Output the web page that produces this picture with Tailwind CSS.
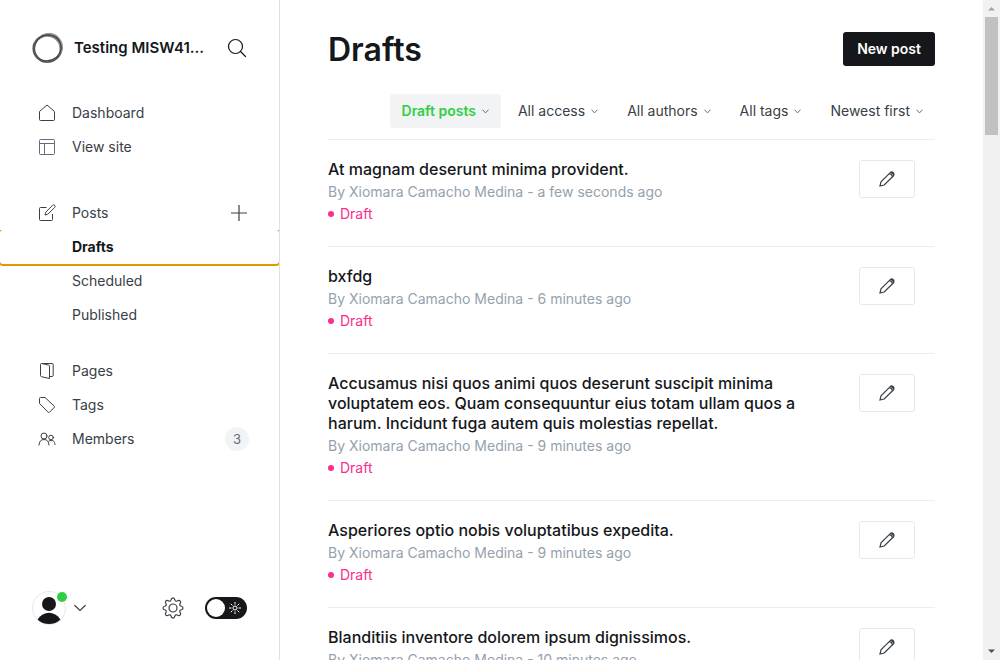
<!DOCTYPE html>
<html lang="en">
<head>
<meta charset="utf-8">
<meta name="viewport" content="width=device-width, initial-scale=1">
<title>Drafts</title>
<script src="https://cdn.jsdelivr.net/npm/@tailwindcss/browser@4"></script>
</head>
<body class="flex h-screen overflow-hidden bg-white font-[Inter,'Liberation_Sans',sans-serif] text-sm text-[#394047]">
<svg class="hidden" aria-hidden="true">
  <symbol id="pencil" viewBox="0 0 16 16"><path d="M1 15 2 10.800 11 1.800C12 .8 13.400.9 14.300 1.700s.9 2.300 0 3.300L5.200 14 1 15ZM10.300 2.600C11.800 2.800 13.200 4.200 13.400 5.700M12.300 1.400c1 .6 1.800 1.400 2.300 2.300"/></symbol>
  <symbol id="chevron" viewBox="0 0 7 5"><path d="M.5.7 3.5 3.9 6.5.7"/></symbol>
</svg>

<aside class="flex w-[280px] shrink-0 flex-col overflow-hidden border-r border-[#dde1e5]">
  <header class="flex items-center pt-8 pr-[30px] pl-8">
    <svg class="size-8 shrink-0" viewBox="0 0 32 32" fill="none" aria-hidden="true">
      <ellipse cx="15.300" cy="16.600" rx="13.700" ry="13.200" stroke="#8a8a8a" stroke-width="2.600"/>
      <path d="M10 3.200C17-.5 25 1.500 28.500 8c3.500 6 2.500 12-2.500 18 2.500-5 3-12 0-16C22 4 16 2.500 10 3.200Z" fill="#a8a8a8" stroke="#888" stroke-width=".8"/>
      <ellipse cx="15.300" cy="16.600" rx="14" ry="13.600" stroke="#444" stroke-width="1"/>
      <ellipse cx="15.800" cy="16" rx="12.600" ry="13.600" stroke="#444" stroke-width="1" transform="rotate(50 16 16)"/>
      <path d="M2 12C.5 20 5 27.500 12 30" stroke="#555" stroke-width="1.400"/>
    </svg>
    <span class="ml-[10px] min-w-0 flex-1 truncate text-[15px] font-semibold text-[#15171a]">Testing MISW41...</span>
    <button class="ml-4 flex size-6 items-center justify-center text-[#15171a]" aria-label="Search">
      <svg class="size-5" viewBox="0 0 20 20" fill="none" stroke="currentColor" stroke-width="1.2" stroke-linecap="round"><circle cx="8.5" cy="8.5" r="7"/><path d="m13.500 13.500 5 5"/></svg>
    </button>
  </header>

  <nav class="mt-8 flex flex-col" aria-label="Main">
    <a href="#" class="flex h-[34px] items-center gap-4 px-[38px]">
      <svg class="size-[18px]" viewBox="0 0 18 18" fill="none" stroke="currentColor"><path d="M1.5 7.5 9 1l7.5 6.5v8a1 1 0 0 1-1 1h-13a1 1 0 0 1-1-1Z"/></svg>Dashboard</a>
    <a href="#" class="flex h-[34px] items-center gap-4 px-[38px]">
      <svg class="size-[18px] text-[#626d79]" viewBox="0 0 18 18" fill="none" stroke="currentColor"><rect x="1.5" y="1.5" width="15" height="15" rx="1"/><path d="M1.5 5.5h15M6.5 5.5v11"/></svg>View site</a>

    <div class="relative z-10 mt-8 flex h-[34px] items-center justify-between bg-white pr-[31px]">
      <a href="#" class="flex items-center gap-4 pl-[38px]">
        <svg class="size-[18px]" viewBox="0 0 18 18" fill="none" stroke="currentColor" stroke-linejoin="round"><path d="M8.5 3.5H2.5a1 1 0 0 0-1 1v11a1 1 0 0 0 1 1h11a1 1 0 0 0 1-1V10"/><path d="m7 11 .7-2.8 6.9-6.9a1.4 1.4 0 0 1 2.1 2.1L9.8 10.3Z"/></svg>Posts</a>
      <a href="#" class="flex size-[18px] items-center justify-center" aria-label="New post">
        <svg class="size-[18px]" viewBox="0 0 18 18" stroke="currentColor" stroke-width="1.200"><path d="M9 1v16M1 9h16"/></svg></a>
    </div>
    <a href="#" aria-current="page" class="flex h-[34px] items-center rounded-[3px] pl-[72px] font-bold text-[#15171a] outline-2 outline-[#e59700]">Drafts</a>
    <a href="#" class="flex h-[34px] items-center pl-[72px]">Scheduled</a>
    <a href="#" class="flex h-[34px] items-center pl-[72px]">Published</a>

    <a href="#" class="mt-[22px] flex h-[34px] items-center gap-4 px-[38px]">
      <svg class="size-[18px]" viewBox="0 0 18 18" fill="none" stroke="currentColor" stroke-linejoin="round"><path d="M3.500 1.500 10.500 3a1.200 1.200 0 0 1 1 1.200v12.300l-8-1.800a1.200 1.200 0 0 1-1-1.200v-11a1 1 0 0 1 1-1h10.500a1.200 1.200 0 0 1 1.200 1.200v10.600a1.200 1.200 0 0 1-1.200 1.200h-2.500"/></svg>Pages</a>
    <a href="#" class="flex h-[34px] items-center gap-4 px-[38px]">
      <svg class="size-[18px]" viewBox="0 0 18 18" fill="none" stroke="currentColor" stroke-linejoin="round"><path d="M1.500 2.500a1 1 0 0 1 1-1H7l9.200 8.600a1 1 0 0 1 0 1.400l-4.700 4.700a1 1 0 0 1-1.400 0L1.500 7.500Z"/></svg>Tags</a>
    <a href="#" class="flex h-[34px] items-center gap-4 pr-[30px] pl-[38px]">
      <svg class="size-[18px]" viewBox="0 0 18 18" fill="none" stroke="currentColor" stroke-linecap="round"><circle cx="6" cy="6" r="3"/><path d="M1 15c0-3.500 2-5.500 5-5.500s5 2 5 5.500"/><circle cx="13" cy="7.500" r="2.300"/><path d="M11 11c3-1.800 6-.2 6 3.500"/></svg>Members
      <span class="ml-auto flex size-6 items-center justify-center rounded-full bg-[#f1f3f4] text-[13px] text-[#626d79]">3</span></a>
  </nav>

  <footer class="mt-auto flex items-center pr-8 pb-[34px] pl-8">
    <button class="flex items-center gap-[6px]" aria-label="Account">
      <svg class="size-9" viewBox="0 0 36 36"><circle cx="17" cy="18" r="16.500" fill="#fff" stroke="#e6e9eb"/><circle cx="17" cy="14" r="7" fill="#15171a"/><path d="M5.500 29.500c6-9 17-9 23 0-6 6-17 6-23 0Z" fill="#15171a"/><circle cx="30" cy="7" r="5" fill="#30cf43"/></svg>
      <svg class="h-2 w-3" viewBox="0 0 12 8" fill="none" stroke="currentColor" stroke-width="1.200" stroke-linecap="round"><path d="M.8 1.500 6 6.500l5.200-5"/></svg>
    </button>
    <a href="#" class="ml-auto" aria-label="Settings">
      <svg class="size-[22px]" viewBox="0 0 22 22" fill="none" stroke="currentColor" stroke-width="1.200" stroke-linejoin="round"><circle cx="11" cy="11" r="4"/><path d="M9 3.200c.6-3 3.400-3 4 0 .3 1 1.200 1.300 2.100.8 2.600-1.600 4.500.3 2.900 2.900-.5.900-.2 1.800.8 2.100 3 .6 3 3.400 0 4-1 .3-1.300 1.200-.8 2.100 1.600 2.600-.3 4.500-2.900 2.900-.9-.5-1.800-.2-2.100.8-.6 3-3.400 3-4 0-.3-1-1.200-1.300-2.100-.8-2.600 1.600-4.500-.3-2.900-2.900.5-.9.200-1.800-.8-2.100-3-.6-3-3.400 0-4 1-.3 1.300-1.200.8-2.100-1.600-2.600.3-4.500 2.900-2.900.9.500 1.800.2 2.100-.8Z"/></svg></a>
    <button class="ml-[21px] flex h-[22px] w-[42px] items-center justify-between rounded-full bg-[#15171a] pr-[6px] pl-[2px] text-white" role="switch" aria-checked="false" aria-label="Night shift">
      <span class="size-[18px] rounded-full bg-white"></span>
      <svg class="size-3" viewBox="0 0 12 12" fill="none" stroke="currentColor"><circle cx="6" cy="6" r="2"/><path d="M6 0v2.500M6 9.500V12M0 6h2.500M9.500 6H12M1.800 1.800l1.700 1.700M8.500 8.500l1.700 1.700M1.800 10.200l1.700-1.700M8.500 3.500l1.700-1.700"/></svg>
    </button>
  </footer>
</aside>

<main class="min-w-0 flex-1 overflow-hidden px-12">
  <header class="flex items-start justify-between pt-8">
    <h1 class="text-[32px] leading-9 font-semibold text-[#15171a]">Drafts</h1>
    <a href="#" class="flex h-[34px] items-center rounded-[3px] bg-[#15171a] px-[14px] font-semibold text-white">New post</a>
  </header>
  <form class="mt-[26px] flex justify-end gap-[5px] border-b border-[#ebeef0] pb-[11px]">
    <label class="flex h-[34px] items-center gap-[6px] rounded-[3px] bg-[#f1f3f4] px-3 font-semibold text-[#30cf43]"><select aria-label="Post status" class="field-sizing-content appearance-none"><option>Draft posts</option></select><svg class="h-[5px] w-[7px] fill-none stroke-[#626d79]"><use href="#chevron"/></svg></label>
    <label class="flex h-[34px] items-center gap-[6px] px-3"><select aria-label="Access" class="field-sizing-content appearance-none"><option>All access</option></select><svg class="h-[5px] w-[7px] fill-none stroke-[#626d79]"><use href="#chevron"/></svg></label>
    <label class="flex h-[34px] items-center gap-[6px] px-3"><select aria-label="Author" class="field-sizing-content appearance-none"><option>All authors</option></select><svg class="h-[5px] w-[7px] fill-none stroke-[#626d79]"><use href="#chevron"/></svg></label>
    <label class="flex h-[34px] items-center gap-[6px] px-3"><select aria-label="Tag" class="field-sizing-content appearance-none"><option>All tags</option></select><svg class="h-[5px] w-[7px] fill-none stroke-[#626d79]"><use href="#chevron"/></svg></label>
    <label class="flex h-[34px] items-center gap-[6px] px-3"><select aria-label="Sort order" class="field-sizing-content appearance-none"><option>Newest first</option></select><svg class="h-[5px] w-[7px] fill-none stroke-[#626d79]"><use href="#chevron"/></svg></label>
  </form>

  <ol class="text-sm leading-[22px] text-[#95a1ad]">
    <li class="flex items-start justify-between border-b border-[#ebeef0] pt-[19px] pr-5 pb-[21px]">
      <div class="max-w-[480px]"><h3 class="mb-[2px] text-base leading-5 font-medium text-[#15171a]">At magnam deserunt minima provident.</h3><p>By Xiomara Camacho Medina - a few seconds ago</p><p class="flex items-center gap-[6px] text-[#fb2d8d]"><span class="size-[6px] rounded-full bg-current"></span>Draft</p></div>
      <a href="#" aria-label="Edit post" class="mt-px flex h-[38px] w-14 shrink-0 items-center justify-center rounded-[3px] border border-[#e6e9eb] text-[#394047]"><svg class="size-4 fill-none stroke-current stroke-[1.2]"><use href="#pencil"/></svg></a>
    </li>
    <li class="flex items-start justify-between border-b border-[#ebeef0] pt-[19px] pr-5 pb-[21px]">
      <div class="max-w-[480px]"><h3 class="mb-[2px] text-base leading-5 font-medium text-[#15171a]">bxfdg</h3><p>By Xiomara Camacho Medina - 6 minutes ago</p><p class="flex items-center gap-[6px] text-[#fb2d8d]"><span class="size-[6px] rounded-full bg-current"></span>Draft</p></div>
      <a href="#" aria-label="Edit post" class="mt-px flex h-[38px] w-14 shrink-0 items-center justify-center rounded-[3px] border border-[#e6e9eb] text-[#394047]"><svg class="size-4 fill-none stroke-current stroke-[1.2]"><use href="#pencil"/></svg></a>
    </li>
    <li class="flex items-start justify-between border-b border-[#ebeef0] pt-[19px] pr-5 pb-[21px]">
      <div class="max-w-[480px]"><h3 class="mb-[2px] text-base leading-5 font-medium text-[#15171a]">Accusamus nisi quos animi quos deserunt suscipit minima voluptatem eos. Quam consequuntur eius totam ullam quos a harum. Incidunt fuga autem quis molestias repellat.</h3><p>By Xiomara Camacho Medina - 9 minutes ago</p><p class="flex items-center gap-[6px] text-[#fb2d8d]"><span class="size-[6px] rounded-full bg-current"></span>Draft</p></div>
      <a href="#" aria-label="Edit post" class="mt-px flex h-[38px] w-14 shrink-0 items-center justify-center rounded-[3px] border border-[#e6e9eb] text-[#394047]"><svg class="size-4 fill-none stroke-current stroke-[1.2]"><use href="#pencil"/></svg></a>
    </li>
    <li class="flex items-start justify-between border-b border-[#ebeef0] pt-[19px] pr-5 pb-[21px]">
      <div class="max-w-[480px]"><h3 class="mb-[2px] text-base leading-5 font-medium text-[#15171a]">Asperiores optio nobis voluptatibus expedita.</h3><p>By Xiomara Camacho Medina - 9 minutes ago</p><p class="flex items-center gap-[6px] text-[#fb2d8d]"><span class="size-[6px] rounded-full bg-current"></span>Draft</p></div>
      <a href="#" aria-label="Edit post" class="mt-px flex h-[38px] w-14 shrink-0 items-center justify-center rounded-[3px] border border-[#e6e9eb] text-[#394047]"><svg class="size-4 fill-none stroke-current stroke-[1.2]"><use href="#pencil"/></svg></a>
    </li>
    <li class="flex items-start justify-between border-b border-[#ebeef0] pt-[19px] pr-5 pb-[21px]">
      <div class="max-w-[480px]"><h3 class="mb-[2px] text-base leading-5 font-medium text-[#15171a]">Blanditiis inventore dolorem ipsum dignissimos.</h3><p>By Xiomara Camacho Medina - 10 minutes ago</p><p class="flex items-center gap-[6px] text-[#fb2d8d]"><span class="size-[6px] rounded-full bg-current"></span>Draft</p></div>
      <a href="#" aria-label="Edit post" class="mt-px flex h-[38px] w-14 shrink-0 items-center justify-center rounded-[3px] border border-[#e6e9eb] text-[#394047]"><svg class="size-4 fill-none stroke-current stroke-[1.2]"><use href="#pencil"/></svg></a>
    </li>
  </ol>
</main>

<div class="flex w-[17px] shrink-0 flex-col items-center bg-[#f1f1f1]" aria-hidden="true">
  <svg class="size-[17px] shrink-0" viewBox="0 0 17 17"><path d="M5 10.500h7L8.500 7Z" fill="#a3a3a3"/></svg>
  <div class="h-[118px] w-[13px] bg-[#c1c1c1]"></div>
  <svg class="mt-auto size-[17px] shrink-0" viewBox="0 0 17 17"><path d="M5 6.500h7L8.500 10Z" fill="#505050"/></svg>
</div>
</body>
</html>
